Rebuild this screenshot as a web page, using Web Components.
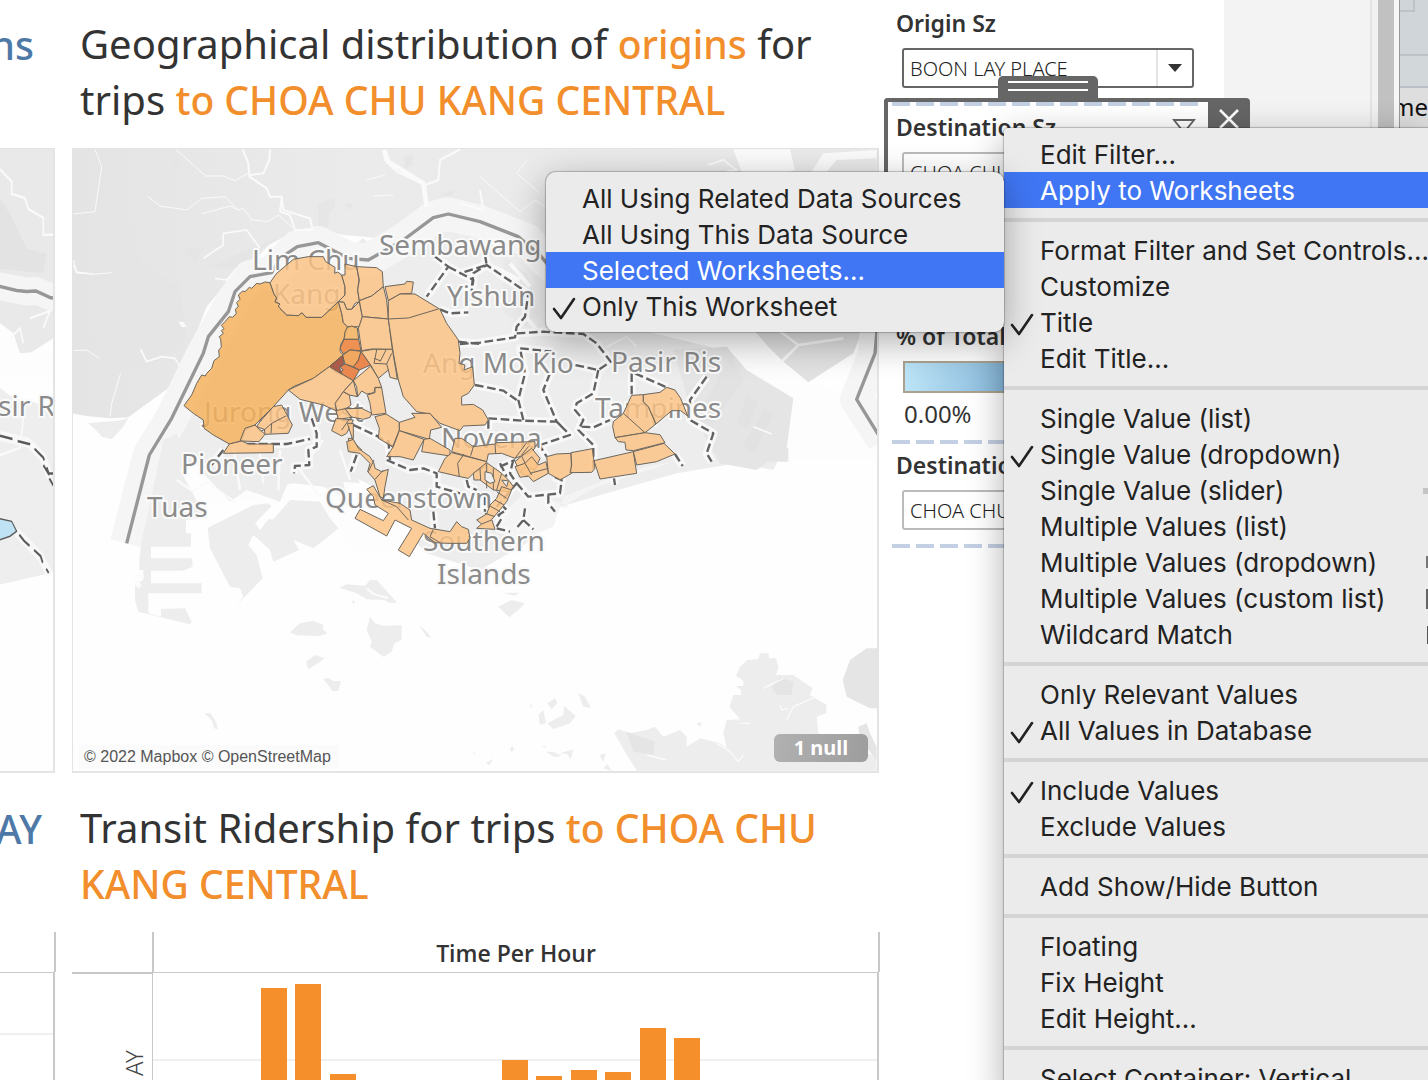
<!DOCTYPE html>
<html lang="en">
<head>
<meta charset="utf-8">
<title>Trips dashboard</title>
<style>
html,body{margin:0;height:100%;overflow:hidden;background:#fff}
body{font-family:"Open Sans","Noto Sans",sans-serif;color:#333}
</style>
</head>
<body>
<trip-dashboard></trip-dashboard>
<script>
const define=(name,html,setup)=>{
  const t=document.createElement('template');t.innerHTML=html;
  customElements.define(name,class extends HTMLElement{
    constructor(){super();this.attachShadow({mode:'open'}).append(t.content.cloneNode(true));}
    connectedCallback(){if(setup)setup(this,this.shadowRoot);}
  });
};

define('sheet-title',`<style>
:host{display:block;overflow:hidden}
h2{margin:0;font:400 40px/56px "Noto Sans",sans-serif;white-space:nowrap}
::slotted(b){font-weight:500;font-size:39px;line-height:1;color:#f28e2b}
:host([cut]) h2{display:flex;justify-content:flex-end;align-items:center;height:56px}
:host([cut]) ::slotted(b){color:#4e79a7}
</style><h2><slot></slot></h2>`);

define('trip-map',`<style>
:host{display:block;position:relative;box-sizing:border-box;height:625px;border:solid #e4e4e4;border-width:1px 2px 2px 1px;overflow:hidden;background:#fefefe}
svg{display:block;width:100%;height:100%}
.land{fill:#e9e9e9}.isle{fill:#ededed}.dark{fill:#e2e2e2}.soft{fill:#e5e5e5}.sea{fill:#fbfbfb}
.buf{fill:none;stroke:#f5f5f5;stroke-width:100;stroke-linejoin:round}
.bord{fill:none;stroke:#979797;stroke-width:10;stroke-linejoin:round}
.riv{fill:none;stroke:#fafafa;stroke-linejoin:round}
.dash{fill:none;stroke:#626262;stroke-width:7;stroke-dasharray:26 11;stroke-linejoin:round}
.halo{fill:none;stroke:#f8f8f8;stroke-width:24;stroke-linejoin:round}
text{font:400 28px "Noto Sans",sans-serif;fill:#8b8b8b;stroke:#fafafa;stroke-width:4px;paint-order:stroke;stroke-linejoin:round}
.z{fill:#fcc486;fill-opacity:.84;stroke:#6b655c;stroke-width:3;stroke-linejoin:round}
.z .w{fill:#f4b15c}.z .a{fill:#ee8036}.z .b{fill:#f29c48}.z .c{fill:#e87331}.z .d{fill:#9f4028}.z .n{fill:none}.z .h{fill:#eee;fill-opacity:1}
footer{position:absolute;left:6px;bottom:2px;padding:0 8px 0 5px;background:rgba(250,250,250,.8);font:16px/24px "Liberation Sans",sans-serif;color:#555}
.null{position:absolute;right:9px;bottom:9px;width:94px;height:28px;border:0;border-radius:6px;background:linear-gradient(100deg,#b1b1b1,#9d9d9d);color:#fff;font:700 20px/28px "Noto Sans",sans-serif;padding:0}
</style>
<svg viewBox="73 149 804 622" preserveAspectRatio="xMinYMin slice" role="img" aria-label="Map of trip origins">
<defs><linearGradient id="m" x1="0" x2="1"><stop offset="0" stop-color="#e4e4e4"/><stop offset=".35" stop-color="#ebebeb"/><stop offset="1" stop-color="#eaeaea"/></linearGradient></defs>
<g transform="translate(60 140) scale(.33333)">
<path fill="url(#m)" d="M38,26H2460V500L2100,640L1900,560L1500,420L1350,290L1200,190H1100L1040,240L960,295L850,285L760,265L700,275L610,325L540,385L500,430L440,500L385,640L345,730L205,832L150,835L80,828L38,820Z"/>
<path class="isle" d="M85,850L130,845L175,842L205,834L190,860L155,898L125,890L110,872Z"/>
<path class="isle" d="M300,960L350,850L430,680L490,520L560,430L680,360L800,320L930,385L1080,270L1160,240L1300,250L1440,300L1560,400L1700,560L1950,620L2040,660L2070,740L2200,780L2185,870L2150,970L2140,990L2030,970L1850,1000L1640,1060L1500,1100L1400,1210L1260,1290L1100,1240L980,1120L870,1050L700,1030L560,1060L480,1080L400,1000Z"/>
<g class="soft" opacity=".7"><path d="M38,180L90,230L200,250L240,370L360,440L380,600L250,690L120,650L60,520Z"/><path d="M175,550L230,540L242,575L218,602L180,580Z"/><path d="M265,200l30-4 8 8-22 10ZM330,72l15-12 14 14-14 16ZM365,325l68-5-28 50ZM775,190l50-18 0 30-18 16-5 60-28-10ZM852,195l14-8 14 10-12 12ZM1030,50l28-6 0 30-22 14ZM895,305l14-10 14 12-12 12ZM1140,165l45-15-12 20Z"/><path d="M450,380L560,330L640,300L560,390Z"/></g>
<path class="buf" d="M200,1210L268,945L335,835L430,640L520,480L570,410L635,398L712,320L775,308L865,355L925,360L1030,300L1120,233L1165,222L1260,245L1400,300L1460,365L1560,450"/>
<g class="riv"><path stroke-width="6" d="M548,28L565,70L568,110L620,145L630,170H665L670,210L750,235L758,270L705,270L690,225L660,215L665,175M570,105L610,100L628,60L630,28M970,30L975,60L1010,95L1095,135L1100,200M1095,135L1135,120L1140,60L1200,28"/><path stroke-width="3" d="M348,28L437,108L490,108L525,122L565,100M265,170L300,198L380,210L425,175L495,170L535,210L550,205L575,240L625,245L655,225L700,265M425,222L510,198L535,210M105,28L125,80L105,215L40,222M40,632L80,630L118,655M920,120L975,105M1000,165L940,168M150,830L155,790L182,700M40,360L50,395L100,403L155,398M1400,60L1370,100L1440,160M1500,230L1425,180L1380,215L1260,110"/><path stroke-width="5" d="M242,628L260,665L305,650L345,655L360,680M40,375L50,398L100,402M600,325L560,270L490,280L490,315L430,355M465,415L500,420L525,390"/><path stroke-width="14" d="M972,30L985,65L1090,130L1100,200"/><path fill="#fafafa" stroke="none" d="M355,545l15 0 10 15-15 2Z"/></g>
</g>
<g transform="translate(460 140) scale(.33333)">
<path class="sea" d="M820,28L850,110L940,110L1005,90L990,28ZM1055,95L1090,40L1250,30V95Z"/><path class="land" d="M1100,95L1130,60L1250,55V95Z"/>
<path class="riv" stroke-width="6" d="M745,75L790,60L830,90L800,95M0,190L70,210L60,150"/>
<path fill="#fdfdfd" d="M520,560L900,560L950,660L1045,727L1250,800V960H990L880,800L780,620Z"/>
<path class="dark" d="M885,575L1205,575L1180,640L1045,727L970,665L925,620Z"/>
<path class="riv" stroke-width="8" d="M935,555L1015,615L1150,595M1015,615L960,670"/>
<path class="soft" d="M640,630L800,620L860,690L1000,775L980,925H985V965H930V960L890,990L780,970L740,900L690,800Z"/>
<path class="dark" d="M810,645L850,720L760,850L705,850Z"/><path class="dark" d="M860,770L895,780L865,865L830,850ZM910,810L940,820L885,940L848,920Z"/><path class="riv" stroke-width="5" d="M880,860L935,882M440,620L500,590L530,620"/>
<path class="land" d="M130,350L200,400L240,520L200,560L130,520Z"/>
<path class="buf" stroke-width="80" d="M1250,560L1245,640L1190,778L1270,900"/><path class="bord" stroke-width="8" d="M1252,560L1245,640L1190,778L1255,884"/>
<path class="riv" stroke-width="12" d="M100,380L180,420M150,370L210,440M190,520L230,570"/>
</g>
<g transform="translate(60 440) scale(.33333)">
<path fill="#f5f5f5" d="M160,298L235,15L300,0L320,55L270,310L240,312Z"/>
<path class="isle" d="M310,0L350,-20L410,130L440,235L378,240V280H393V320H273V355H396L398,380L370,392H273V430H425V460H265V520L303,530V507L375,505L395,545L390,553L235,515L225,480V430L250,420V390H238V360L245,300L262,230Z"/>
<path class="sea" d="M222,405h30v8h-30ZM222,430l15-10 8 18-10 8Z"/>
<path fill="#fdfdfd" d="M360,90L430,70L520,135L700,140L780,160L860,100L960,150L1050,250L1110,290L1000,330H880L780,200L560,180L420,200Z"/>
<path class="isle" d="M430,100L500,60L610,80L700,60L720,105H780L800,70L880,80L900,130L850,125L860,175L770,130L690,115L660,185L560,150L510,185Z"/>
<path class="isle" d="M443,265L460,255L580,195L625,190L635,198L585,250L600,270L625,238L640,238L690,180L780,185L810,235L835,265L805,290L760,325L700,300L717,330L640,365L630,330L580,285L565,315L590,345L608,415L550,475L530,495L550,470L540,445L510,440L450,325Z"/>
<path class="riv" stroke-width="7" d="M350,120L400,155L440,125L530,190M520,20L540,150M600,40L610,130M660,30L655,150M780,170L720,90L790,0M840,30L870,120"/>
<path class="isle" d="M838,443L860,433L915,437L930,420L950,420L1012,488H985L975,480L920,478L890,460ZM872,482l12 0 0 10ZM930,530L945,550L970,558L1025,555V598L1002,612L995,635L970,650L930,620L935,605L920,570ZM1077,556L1095,570L1115,593L1100,590ZM690,577L720,550L760,542L790,555L788,568L803,580L780,588L710,586ZM738,665L765,645L795,655L770,672L745,688ZM790,717L805,714L820,723L843,723L835,753L818,753ZM433,820L452,820L470,850L473,868L462,865L455,840Z"/>
<path class="riv" stroke-width="7" d="M920,445L940,462L985,475"/>
<path class="isle" opacity=".7" d="M1150,340L1230,330L1280,390L1240,385Z"/>
</g>
<g transform="translate(460 440) scale(.33333)">
<path fill="#f4f4f4" d="M300,205L400,145L640,65L560,80L420,125L310,170L280,260L180,300L100,250L200,150L330,200Z"/>
<path class="isle" d="M115,500L155,480L195,490L175,510L148,532ZM210,798l8-8-4 14ZM355,760L375,770L393,805L370,800ZM262,790L285,775L292,790L275,808ZM235,825L250,810L258,850L240,855ZM262,850L310,825L312,797L347,828L330,850L280,868Z"/>
<path class="isle" d="M808,800L820,765H843V750L827,738H850V722L828,708L840,680L862,660L895,658L900,640H925L928,655H948L955,680L948,705L1000,705L1058,745L1050,765L1100,795L1098,820L1070,830L1075,880L1250,950V992H530L495,935L463,880L475,868L510,880L560,870L585,860L610,890L660,870L680,890V920L720,895L780,910L800,925L790,880L800,840L840,838Z"/>
<path class="soft" d="M1148,720L1170,660L1220,625H1252V805H1230L1160,770ZM1195,860L1220,850L1230,880L1250,920V960L1200,900ZM500,875L585,905L580,945L520,935ZM935,740L960,712L1000,725L995,765L950,765Z"/>
<path class="riv" stroke-width="4" d="M910,745L970,715M1070,770L1000,800L980,840M960,795L965,810L985,805M770,910L810,935L835,965L850,945M840,850H870M560,945L620,960"/>
<path class="isle" d="M35,932l12 10-2 4ZM78,968l22-12-12 20ZM150,925l8-6 4 10-8 8ZM245,918l12 0 0 6ZM258,935l20 0 28 12-22 5ZM300,940l40-12-8 30-10-15ZM418,945l20-5-8 25ZM430,985l12-12 14 20ZM710,850l16-4-6 16ZM130,458h50l-18 10Z"/>
</g>
<path class="bord" transform="translate(60 140) scale(.33333)" d="M200,1210L268,945L335,835L430,640L445,590L505,515L525,455L570,410L635,398L660,355L712,320L775,308L865,355L925,360L1030,300L1120,233L1165,222L1260,245L1375,290L1440,345L1480,395"/>
<g id="dashes"></g>
<g>
<text x="252" y="270">Lim Chu</text><text x="273" y="304">Kang</text><text x="379" y="255">Sembawang</text><text x="447" y="306">Yishun</text><text x="423" y="373">Ang Mo Kio</text><text x="611" y="372">Pasir Ris</text><text x="595" y="418">Tampines</text><text x="204" y="422">Jurong West</text><text x="441" y="448">Novena</text><text x="181" y="474">Pioneer</text><text x="147" y="517">Tuas</text><text x="325" y="508">Queenstown</text><text x="423" y="551">Southern</text><text x="437" y="584">Islands</text>
</g>
<g class="z" transform="translate(60 140) scale(.33333)">
<path class="w" d="M630,428L615,426L600,432L590,430L575,445L568,442L555,455L548,453L535,465L540,478L530,488L535,500L526,508L529,520L518,532L508,530L495,545L484,556L492,566L484,572L490,580L478,590L482,598L484,622L476,630L478,650L462,662L455,685L440,700L436,708L425,705L410,730L395,765L372,797L400,820L430,840L432,865L460,885L508,912L545,903L555,870L585,855L640,800L685,750L700,740L760,715L808,680L850,645L840,635L842,615L855,590L862,560L850,548L845,520L835,485L785,532H738L726,518L715,527L680,525L660,505L655,498L660,492L645,485L650,474L642,462Z"/>
<path d="M630,428L650,400L700,358L745,350L790,350L797,365L825,382L824,400L833,396L845,405L855,440V465L835,485L785,532H738L726,518L715,527L680,525L660,505L655,498L660,492L645,485L650,474L642,462Z"/>
<path d="M855,372L890,380L897,420L893,450L898,485L885,490L875,508H860L852,487L835,485L855,465V440L845,405H855Z"/>
<path d="M890,380L950,383L967,395L970,440L935,468L898,482L893,450L898,420Z"/>
<path d="M835,485L852,487L860,508H875L898,485L907,530L900,560L862,560L850,548L845,520Z"/>
<path d="M898,482L935,468L970,440L980,480L985,537L907,530Z"/>
<path d="M907,530L985,537L997,628L935,627L905,632L895,565Z"/>
<path class="w" d="M862,562L875,558L892,564L896,598H852L855,575Z"/>
<path class="a" d="M852,598H896L903,632L870,630L850,642L840,625Z"/>
<path class="b" d="M848,646L870,630L903,634L895,665L880,680L855,672Z"/>
<path class="c" d="M903,634L932,675L898,690L880,680L895,660ZM855,672L898,690L880,722L835,700L850,690L840,682Z"/>
<path class="d" d="M808,680L848,646L852,672L838,682L848,705L825,695Z"/>
<path d="M975,440L1035,432L1040,424L1060,426L1055,460L1020,462L985,482Z"/>
<path d="M985,482L1020,462H1065L1140,508L1160,550L1195,600L1200,640L1197,670L1215,675L1212,690L1238,680L1243,735L1225,760L1205,770V795L1240,793L1268,810L1285,840L1275,855L1210,858L1200,872L1140,850L1110,822L1070,815L1030,770L1015,720L1000,640L985,537Z"/><path class="n" d="M985,537L1045,534L1135,507"/>
<path d="M903,634L940,628H997L1012,718L990,712L985,690L955,715L932,675Z"/><path class="n" d="M950,630L942,670L980,672L985,690M960,665L978,630M980,672L995,640M942,655L960,662"/>
<path d="M880,722L932,678L955,715L965,742H945L942,758L920,762L905,753L893,770L890,740Z"/>
<path d="M685,750L760,715L808,680L880,722L850,755L828,790V812L790,795L720,778Z"/>
<path d="M850,755L868,765L873,795L855,808L835,830L825,790ZM880,722L892,770L868,765L850,755Z"/>
<path d="M922,765L945,758V743H965L978,820L935,825L930,790Z"/><path d="M855,806L905,805L935,820L930,832L910,838L870,830Z"/><path d="M828,812L855,806L875,832L835,838Z"/>
<path d="M640,800L665,795L697,855L685,880L615,883L613,868L590,860L600,845Z"/><path class="n" d="M585,855L600,875L615,868L635,850L633,880M635,850L678,828"/>
<path d="M585,855L615,883L597,905L540,903L555,865Z"/><path d="M508,912L545,903L565,912H640V938L490,940Z"/>
<path d="M828,835L880,840L860,880L845,888L815,872Z"/><path class="n" d="M866,840L845,870"/><path d="M862,850L880,850V895L865,895L870,935L905,930L880,905Z"/>
<path d="M945,830L978,822L1018,847V870L998,920L955,895L958,865Z"/><path d="M1018,847L1065,832L1055,820L1110,820L1145,862L1112,870L1108,898L1018,872Z"/>
<path d="M1018,872L1092,898L1060,960L1020,950L980,950L1000,920ZM1092,898L1110,895L1170,930V948L1085,935Z"/>
</g>
<g class="z" transform="translate(320 320) scale(.33333)">
<path d="M405,355H425L460,380L525,372L530,368L645,365V385L625,400L585,415L545,400L505,402L500,425L395,395Z"/><path class="n" d="M460,380L452,407M525,372L527,400M585,415L620,368M605,405L625,380"/>
<path d="M395,398L500,425L497,438L460,460L445,475L420,470L355,455L375,415Z"/><path class="n" d="M432,402L413,430L418,470"/>
<path d="M460,460L500,428L545,460L570,485L580,500L570,515L520,510L480,480L462,480Z"/><path class="n" d="M480,445L482,480M500,430V505M520,445V510M545,460L530,510"/><path class="h" d="M495,455L515,460L525,485L510,490L495,480ZM545,480L565,483L560,500Z"/>
<path d="M585,425L605,408L635,385L660,415L645,450L620,470L600,455Z"/><path class="n" d="M605,408L620,440L645,450M620,440L600,455"/>
<path d="M545,500L575,510L560,545L535,575L515,598L525,628L470,625L485,612L470,600L500,582L510,555L530,535Z"/><path class="n" d="M530,515L560,535M525,540L552,555M510,558L540,575M495,580L525,590M485,612L515,600"/>
<path d="M80,365L100,358L115,385L150,410L162,430L165,445L185,455L205,448L195,500L190,535L180,530L165,480L143,455L150,430L120,400L85,395Z"/><path class="n" d="M162,420L145,455M190,450L165,478"/>
<path d="M140,508L160,497L185,540L240,550L270,570L275,600L330,625L390,635L410,605L425,620L445,628L450,655L440,670L380,670L345,668L310,640L268,710L235,690L275,625L225,600L200,648L105,595L120,568L190,602L205,580L165,555L160,530Z"/><path class="n" d="M185,540L230,560L265,600M340,628L330,650L360,668"/>
</g>
<g class="z" transform="translate(460 440) scale(.33333)">
<path d="M260,50L290,42L333,40L335,100L300,120L265,100Z"/><path d="M333,38L397,26L405,85L395,97L330,98L335,75Z"/>
<path d="M402,62L520,35L530,100L420,117Z"/><path d="M520,35L612,10L645,42L590,65L530,75Z"/>
<path d="M165,80L195,70L215,50L235,75L258,65L265,100L220,125L205,108L180,112Z"/><path class="n" d="M210,100L265,85M195,70L215,105"/>
</g>
<g class="z" transform="translate(460 140) scale(.33333)">
<path d="M515,766L550,764V785L565,800L588,852L555,878L465,893L458,860L460,845L490,820Z"/><path class="n" d="M490,820L555,878"/>
<path d="M550,764L600,757L620,742L645,750L662,775L683,828L662,812L635,812L588,852L565,800L550,785Z"/><path d="M465,893L555,878L600,884L615,908L520,932L498,930L495,907L475,905Z"/>
</g>
</svg>
<footer>© 2022 Mapbox © OpenStreetMap</footer><button class="null">1 null</button>`,
(el,r)=>{
  const lines=[
   [460,140,'M0,612L60,608L165,592L170,560L195,530L205,460L80,375L40,400L35,450M75,345L80,375L0,400M170,580L250,575L370,582L410,610L452,665L415,690L330,672M280,635L180,625L195,700L175,780L190,840M45,735L130,752L170,780M85,835L190,842L290,845L330,885L240,915M270,700L250,750L290,845L320,875M415,690L400,760L350,790L345,810L370,840L355,870L400,915V990M365,860L400,862L450,840M515,700V766M525,700L620,742M740,710L690,780V840L760,880L740,940L755,965M85,840V870'],
   [60,140,'M1125,350L1165,380L1100,470M1165,380L1240,420L1235,455M1140,508L1170,520L1225,517M1195,605L1260,612M560,912H680L750,897M755,835L770,880V920L745,930L748,975L705,978L702,1000M880,855L955,890L1000,920M490,930L455,975'],
   [60,440,'M980,60L1050,90L1090,85L1130,100V140L1200,160M1120,215L1125,265M890,45L872,95M985,0L990,60'],
   [460,440,'M170,130L205,170L300,160L305,120L280,110M265,165V190L285,215M195,205L190,240L165,270M190,240L220,268M110,265L150,275M645,42L668,78M462,115L465,135M235,10L260,50M160,60L150,100L170,130L110,200M120,70L140,110M75,170V215M110,260L125,235L115,225L140,210L130,200M20,120L25,140L50,150M120,80L165,60']];
  const g=r.getElementById('dashes');
  g.innerHTML=['halo','dash'].map(c=>lines.map(([x,y,d])=>`<path class="${c}" transform="translate(${x} ${y}) scale(.33333)" d="${d}"/>`).join('')).join('');
});

define('trip-map-edge',`<style>
:host{display:block;box-sizing:border-box;height:625px;border:solid #e4e4e4;border-width:1px 2px 2px 0;overflow:hidden;background:#fefefe}
svg{display:block}
text{font:400 28px "Noto Sans",sans-serif;fill:#8b8b8b;stroke:#fafafa;stroke-width:4px;paint-order:stroke}
</style><svg width="53" height="622" viewBox="0 149 53 622"><g transform="scale(.33333 .49745)" fill="none">
<path fill="#e9e9e9" d="M0,298H160V680L90,710L0,720Z"/><path fill="#e3e3e3" d="M0,400L30,430L80,500L140,510L130,550L0,540Z"/>
<path fill="#fdfdfd" d="M0,650L40,670L60,710L160,705V760H0Z"/>
<path fill="#eee" d="M0,780L40,800L110,810L160,830V1150L100,1160L0,1175Z"/>
<path stroke="#f5f5f5" stroke-width="56" d="M-5,575L80,586L110,585L165,600"/><path stroke="#979797" stroke-width="7" d="M-5,575L50,584L80,586L108,585L150,598L165,600"/>
<path stroke="#fafafa" stroke-width="5" d="M0,340L35,365V390L75,398L85,420L130,438V472H160M30,680L60,660L70,690M90,640L150,625L130,660M70,840L60,900L0,915"/>
<path stroke="#f8f8f8" stroke-width="20" d="M0,876L85,890L130,920L150,960M50,1070L120,1118L150,1155"/>
<path stroke="#5a5a5a" stroke-width="5" stroke-dasharray="38 16" d="M0,876L40,883L55,887L90,893L130,920L148,955M130,935L145,952H160M148,962L160,976M58,1075L72,1087L122,1118L128,1131L146,1152"/>
<path fill="#bfe2f4" stroke="#5a5a5a" stroke-width="3" d="M-4,1042L35,1048L50,1068L30,1078L-4,1086Z"/>
</g><text x="-2" y="416">sir R</text></svg>`);

define('hour-chart',`<style>
:host{display:grid;grid-template:40px 400px/80px minmax(0,1fr);color:#333}
.corner{border-bottom:2px solid #c8c8c8;box-sizing:border-box;height:42px}
.head{border:solid #c8c8c8;border-width:0 2px;margin-right:-1px;text-align:center;font:600 23px/42px "Open Sans",sans-serif}
.row{display:flex;justify-content:flex-end;padding:78px 2px 0 0;font:300 24px/32px "Noto Sans",sans-serif;color:#444}
.row span{writing-mode:vertical-rl;transform:rotate(180deg);align-self:flex-start}
.plot{display:grid;grid-template-columns:repeat(21,minmax(0,1fr));border:solid #c8c8c8;border-width:1px 2px 0 1px;background:linear-gradient(#f0f0f0,#f0f0f0) 0 86px/100% 2px no-repeat;align-items:end;justify-items:center;height:400px;box-sizing:border-box}
i{display:block;width:26px;background:#f58f2c}
</style><div class="corner"></div><div class="head">Time Per Hour</div><div class="row"><span>AY</span></div><div class="plot"></div>`,
(el,r)=>{
  const plot=r.querySelector('.plot');
  for(const h of [0,0,0,384,388,298,250,240,240,250,312,296,302,300,344,334,250,200,150,100,50]){
    const b=document.createElement('i');b.style.height=h+'px';plot.append(b);
  }
});

define('hour-chart-edge',`<style>
:host{display:block;height:440px}
.h{height:40px;border-right:1px solid #c8c8c8;box-sizing:border-box;box-shadow:inset -1px 0 #c8c8c8}
.p{height:400px;margin-right:1px;border:solid #c8c8c8;border-width:1px 2px 0 0;background:linear-gradient(#f0f0f0,#f0f0f0) 0 60px/100% 2px no-repeat}
</style><div class="h"></div><div class="p"></div>`);

define('filter-card',`<style>
:host{display:block;position:relative;padding:7px 12px 10px}
label{display:block;font:600 23px/32px "Noto Sans",sans-serif;margin-bottom:9px;white-space:nowrap}
.box{position:relative;display:flex;margin-left:6px;width:292px;height:40px;box-sizing:border-box;border:2px solid #bbb;border-radius:3px;background:#fff}
select{flex:1;min-width:0;appearance:none;border:0;background:none;margin:0;padding:2px 0 0 6px;font:300 20px/34px "Noto Sans",sans-serif;color:#222;outline:0}
.arrow{width:34px;border-left:2px solid #e4e4e4;display:grid;place-items:center;pointer-events:none}
:host([active]) .box{border-color:#666}
.dash{display:none;height:4px;background:repeating-linear-gradient(90deg,#c3cfe3 0 18px,#fff 18px 24px)}
:host([dashed]){padding-top:0;padding-bottom:14px}
:host([dashed]) .dash{display:block;margin:0 -1px 5px -4px}
.tools{display:none}
:host([framed]){border:solid #666;border-width:4px 0 4px 4px;border-radius:4px 0 0 0;padding-left:8px;width:312px;padding-right:0}
:host([framed]) .dash{margin-right:9px}
:host([framed]) .tools{display:block}
:host([last]){padding-bottom:0}
:host([last])::after{content:"";display:block;height:4px;margin:14px -1px 0 -4px;background:repeating-linear-gradient(90deg,#c3cfe3 0 18px,#fff 18px 24px)}
button{position:absolute;border:0;padding:0;background:#666;display:grid;place-items:center}
.grip{left:110px;top:-26px;width:100px;height:26px;border-radius:5px 5px 0 0;align-content:start}
.close{left:100%;top:-4px;width:42px;height:80px;border-radius:0 4px 4px 0;align-content:start}
.menu{right:12px;top:16px;width:24px;height:20px;background:none}
</style>
<div class="tools"><button class="grip" aria-label="Move"><svg width="80" height="18"><path d="M0,6H80M0,14H80" stroke="#fff" stroke-width="2"/></svg></button>
<button class="close" aria-label="Remove"><svg width="24" height="36" viewBox="0 0 24 36"><path d="M3,12L21,30M21,12L3,30" stroke="#fff" stroke-width="2.5"/></svg></button>
<button class="menu" aria-label="Filter"><svg width="24" height="20" viewBox="0 0 24 20"><path d="M2,2H22L14,12V18L10,15V12Z" fill="none" stroke="#666" stroke-width="2"/></svg></button></div>
<div class="dash"></div><label for="s"></label><div class="box"><select id="s"><option></option></select><div class="arrow"><svg width="14" height="8"><path d="M0,0H14L7,8Z" fill="#333"/></svg></div></div>`,
(el,r)=>{r.querySelector('label').textContent=el.getAttribute('label');r.querySelector('option').textContent=el.getAttribute('value');});

define('color-legend',`<style>
:host{display:block;padding:0 12px 10px}
h3{margin:0 0 9px;font:600 23px/32px "Noto Sans",sans-serif}
.ramp{margin-left:7px;width:292px;height:32px;box-sizing:border-box;border:2px solid #aaa18e;background:linear-gradient(90deg,#bce4f6,#7fb0d6 40%,#26456e)}
.v{margin-left:8px;font:400 24px/32px "Noto Sans",sans-serif;padding-top:5px}
</style><h3>% of Total</h3><div class="ramp"></div><div class="v">0.00%</div>`);

define('context-menu',`<style>
:host{display:block;padding:8px 0;box-sizing:border-box;background:#ebebeb;box-shadow:0 0 1px 1px rgba(0,0,0,.22),0 10px 36px rgba(0,0,0,.32);font:400 26px/34px Inter,sans-serif;color:#222}
</style><slot></slot>`);
define('menu-rule',`<style>:host{display:block;height:4px;margin:10px 0;background:#d4d4d4}</style>`);
define('menu-item',`<style>
:host{display:block}
button{display:flex;align-items:center;width:100%;height:36px;border:0;padding:2px 0 0;background:none;font:inherit;color:inherit;text-align:left;white-space:nowrap}
.c{width:36px;height:34px;flex:none}.c svg{display:none}
:host([checked]) .c svg{display:block}
:host([selected]) button{background:#4076f4;color:#fff}
.t{flex:1}
::slotted(svg){flex:none}
</style><button role="menuitem"><span class="c"><svg width="36" height="34"><path d="M8,19L15,28L28,9" fill="none" stroke="#222" stroke-width="2.6" stroke-linecap="round" stroke-linejoin="round"/></svg></span><span class="t"><slot></slot></span><slot name="icon"></slot></button>`);

define('trip-dashboard',`<style>
:host{display:grid;grid-template-columns:56px minmax(0,1fr) 345px 154px 50px;height:100vh;overflow:hidden;position:relative}
.edge,.main{display:flex;flex-direction:column;padding-top:16px}
.main{padding-left:16px}
.edge trip-map-edge{margin-right:1px}
.main>sheet-title{padding-left:8px}
.edge>sheet-title{height:112px}.edge>sheet-title:first-child{padding-right:22px}.edge>sheet-title{padding-right:14px}
trip-map,trip-map-edge{margin:20px 0 27px}
hour-chart,hour-chart-edge{margin-top:20px}
.panel{padding-left:5px}
color-legend{margin-top:110px}
.gutter{background:#f3f3f3;box-sizing:border-box;border-right:6px solid #f1f1f1;box-shadow:inset -2px 0 #e4e4e4}
.back{display:grid;grid-template-columns:16px 6px 1fr}
.bar{background:#c1c1c1}.rim{background:#f6f6f6;border-right:1px solid #999}
.win{overflow:hidden;background:linear-gradient(#bcc3c6,#bcc3c6) 13px 0/2px 12px no-repeat,linear-gradient(#bcc3c6,#bcc3c6) 0 10px/15px 2px no-repeat,linear-gradient(#cfd5d8 0 54px,#bcc3c6 54px 56px,#d2d8da 56px 86px,#b9c1c6 86px 88px,#dedede 88px);font:24px/32px "Noto Sans",sans-serif;color:#111;display:flex;justify-content:flex-end;align-items:flex-start;padding-top:91px;box-sizing:border-box}
.m1{position:absolute;left:1004px;right:0;top:128px;border-radius:4px 0 0 0}
.m2{position:absolute;left:546px;top:172px;width:458px;border-radius:10px}
</style>
<div class="edge"><sheet-title cut><b>ns</b></sheet-title><trip-map-edge></trip-map-edge><sheet-title cut><b>AY</b></sheet-title><hour-chart-edge></hour-chart-edge></div>
<div class="main"><sheet-title>Geographical distribution of <b>origins</b> for<br>trips <b>to CHOA CHU KANG CENTRAL</b></sheet-title><trip-map></trip-map><sheet-title>Transit Ridership for trips <b>to CHOA CHU<br>KANG CENTRAL</b></sheet-title><hour-chart></hour-chart></div>
<div class="panel">
<filter-card active label="Origin Sz" value="BOON LAY PLACE"></filter-card>
<filter-card dashed framed label="Destination Sz" value="CHOA CHU KANG CENTRAL"></filter-card>
<color-legend></color-legend>
<filter-card dashed last label="Destination Sz" value="CHOA CHU KANG CENTRAL"></filter-card>
</div>
<div class="gutter"></div>
<div class="back"><div class="bar"></div><div class="rim"></div><div class="win">me</div></div>
<context-menu class="m1" role="menu">
<menu-item>Edit Filter...</menu-item><menu-item selected>Apply to Worksheets</menu-item><menu-rule></menu-rule>
<menu-item>Format Filter and Set Controls...</menu-item><menu-item>Customize</menu-item><menu-item checked>Title</menu-item><menu-item>Edit Title...</menu-item><menu-rule></menu-rule>
<menu-item>Single Value (list)</menu-item><menu-item checked>Single Value (dropdown)</menu-item><menu-item>Single Value (slider)<svg slot="icon" width="5" height="16"><path d="M0,5H5V11H0Z" fill="#c4c4c4"/></svg></menu-item><menu-item>Multiple Values (list)</menu-item><menu-item>Multiple Values (dropdown)<svg slot="icon" width="2" height="16"><path d="M1,1V13" stroke="#777" stroke-width="2"/></svg></menu-item><menu-item>Multiple Values (custom list)<svg slot="icon" width="2" height="20"><path d="M1,0V20" stroke="#666" stroke-width="2"/></svg></menu-item><menu-item>Wildcard Match<svg slot="icon" width="1" height="18"><path d="M1,0V18" stroke="#555" stroke-width="2"/></svg></menu-item><menu-rule></menu-rule>
<menu-item>Only Relevant Values</menu-item><menu-item checked>All Values in Database</menu-item><menu-rule></menu-rule>
<menu-item checked>Include Values</menu-item><menu-item>Exclude Values</menu-item><menu-rule></menu-rule>
<menu-item>Add Show/Hide Button</menu-item><menu-rule></menu-rule>
<menu-item>Floating</menu-item><menu-item>Fix Height</menu-item><menu-item>Edit Height...</menu-item><menu-rule></menu-rule>
<menu-item>Select Container: Vertical</menu-item>
</context-menu>
<context-menu class="m2" role="menu"><menu-item>All Using Related Data Sources</menu-item><menu-item>All Using This Data Source</menu-item><menu-item selected>Selected Worksheets...</menu-item><menu-item checked>Only This Worksheet</menu-item></context-menu>`);
</script>
</body>
</html>
